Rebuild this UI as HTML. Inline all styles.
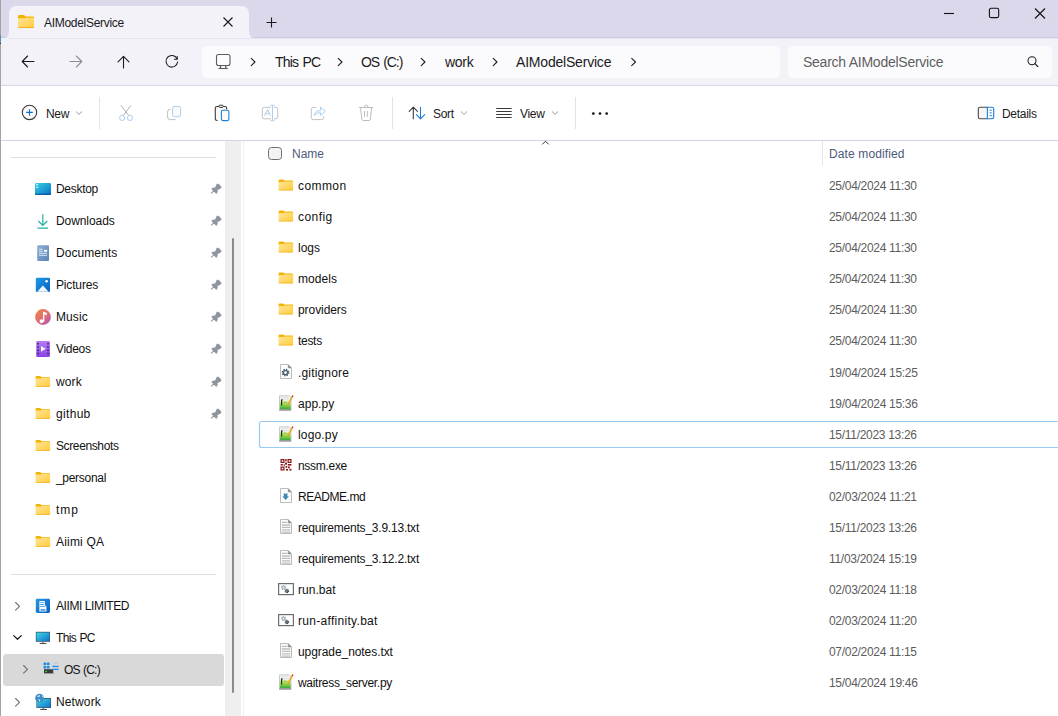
<!DOCTYPE html>
<html><head><meta charset="utf-8">
<style>
*{box-sizing:border-box;margin:0;padding:0}
html,body{width:1058px;height:716px;overflow:hidden;background:#fff;font-family:"Liberation Sans",sans-serif;color:#1a1a1a;font-variant-ligatures:none}
.a{position:absolute}
.t{position:absolute;white-space:nowrap;font-size:12px;line-height:14px;letter-spacing:-0.3px}
.t14{position:absolute;white-space:nowrap;font-size:14px;line-height:16px;letter-spacing:-0.3px}
svg{position:absolute;overflow:visible}
#title{left:0;top:0;width:1058px;height:38px;background:#dbd8ec;border-bottom:1px solid #d0cce0}
#tab{left:9px;top:6px;width:240px;height:33px;background:#f3f2f9;border-radius:7px 7px 0 0}
#nav{left:0;top:38px;width:1058px;height:48px;background:#f3f2f9;border-bottom:1px solid #d9d6e6}
#addr{left:202px;top:46px;width:578px;height:32px;background:#fbfbfe;border-radius:5px}
#search{left:788px;top:46px;width:264px;height:32px;background:#fbfbfe;border-radius:5px}
#cmd{left:0;top:86px;width:1058px;height:55px;background:#fff;border-bottom:1px solid #d5d2e3}
#lborder{left:0;top:0;width:1px;height:716px;background:#9a9a9a}
.sep{position:absolute;width:1px;background:#e3e3e3}
.s{color:#111}
.r{color:#111}
.dt{color:#5c5c5c}
.hd{color:#4d5a78}
</style></head><body>
<div id="title" class="a"></div>
<div id="nav" class="a"></div>
<div id="tab" class="a"></div>
<!-- tab inverse corners -->
<svg style="left:0;top:0" width="1058" height="40">
  <path d="M1 39 L9 39 L9 31 Q9 39 1 39 Z" fill="#f3f2f9"/>
  <path d="M257 39 L249 39 L249 31 Q249 39 257 39 Z" fill="#f3f2f9"/>
</svg>
<!-- tab folder icon -->
<svg style="left:18px;top:15px" width="16" height="13" viewBox="0 0 16 13">
  <defs><linearGradient id="fg1" x1="0" y1="0" x2="1" y2="1"><stop offset="0" stop-color="#ffe497"/><stop offset="1" stop-color="#ffcd3c"/></linearGradient></defs>
  <path d="M0 1.2 Q0 0 1.2 0 L6 0 L7.5 1.5 L14.8 1.5 Q16 1.5 16 2.7 L16 4 L0 4 Z" fill="#f2b200"/>
  <path d="M0 3.3 L6.5 3.3 L8 2.8 L16 2.8 L16 11.8 Q16 13 14.8 13 L1.2 13 Q0 13 0 11.8 Z" fill="url(#fg1)"/>
  <rect x="0" y="12" width="16" height="1" fill="#e9a700" opacity="0.7"/>
</svg>
<div class="t" style="left:44px;top:16px;color:#1a1a1a;font-size:12px">AIModelService</div>
<!-- tab close -->
<svg style="left:223px;top:17px" width="10" height="10"><path d="M0.5 0.5 L9.5 9.5 M9.5 0.5 L0.5 9.5" stroke="#1a1a1a" stroke-width="1.1"/></svg>
<!-- new tab plus -->
<svg style="left:266px;top:17px" width="11" height="11"><path d="M5.5 0.5 V10.5 M0.5 5.5 H10.5" stroke="#1a1a1a" stroke-width="1.1"/></svg>
<!-- window controls -->
<svg style="left:943px;top:8px" width="104" height="12">
  <path d="M1 5.5 H11" stroke="#111" stroke-width="1.1"/>
  <rect x="46.4" y="0.3" width="9.3" height="9.3" rx="1.6" fill="none" stroke="#111" stroke-width="1.1"/>
  <path d="M92 0.5 L102 10.5 M102 0.5 L92 10.5" stroke="#111" stroke-width="1.1"/>
</svg>

<div id="addr" class="a"></div>
<div id="search" class="a"></div>
<!-- nav icons -->
<svg style="left:0;top:0" width="1058" height="90">
  <path d="M22.3 61.5 H34 M27.6 56 L22.2 61.5 L27.6 67" fill="none" stroke="#1c1c1c" stroke-width="1.1" stroke-linecap="round" stroke-linejoin="round"/>
  <path d="M70 61.5 H81.7 M76.3 56 L81.8 61.5 L76.3 67" fill="none" stroke="#8f8f8f" stroke-width="1.1" stroke-linecap="round" stroke-linejoin="round"/>
  <path d="M123.5 56.5 V68 M118 61.8 L123.5 56.3 L129 61.8" fill="none" stroke="#1c1c1c" stroke-width="1.1" stroke-linecap="round" stroke-linejoin="round"/>
  <path d="M177 58.6 A5.8 5.8 0 1 0 177.6 62" fill="none" stroke="#1c1c1c" stroke-width="1.1" stroke-linecap="round"/>
  <path d="M177.2 56.5 V59.2 H174.4" fill="none" stroke="#1c1c1c" stroke-width="1.1" stroke-linecap="round" stroke-linejoin="round"/>
  <!-- computer -->
  <rect x="216.5" y="54.5" width="13.5" height="11" rx="2" fill="none" stroke="#5c5c5c" stroke-width="1.1"/>
  <path d="M220.5 65.5 V68 M225.8 65.5 V68" stroke="#5c5c5c" stroke-width="1.3"/>
  <path d="M218.5 68.5 H227.8" stroke="#5c5c5c" stroke-width="1.1"/>
  <!-- chevrons -->
  <g fill="none" stroke="#1c1c1c" stroke-width="1.05" stroke-linecap="round" stroke-linejoin="round">
    <path d="M251.2 58.3 L255 62 L251.2 65.7"/>
    <path d="M338.2 58.3 L342 62 L338.2 65.7"/>
    <path d="M421.2 58.3 L425 62 L421.2 65.7"/>
    <path d="M493.2 58.3 L497 62 L493.2 65.7"/>
    <path d="M631.7 58.3 L635.5 62 L631.7 65.7"/>
  </g>
  <!-- search -->
  <circle cx="1032" cy="60.7" r="4" fill="none" stroke="#1c1c1c" stroke-width="1.05"/>
  <path d="M1034.9 63.6 L1037.8 66.5" stroke="#1c1c1c" stroke-width="1.1" stroke-linecap="round"/>
</svg>
<div class="t14" style="left:275px;top:54px;letter-spacing:-0.8px;word-spacing:1.2px">This PC</div>
<div class="t14" style="left:361px;top:54px;letter-spacing:-1.05px;word-spacing:1.2px">OS (C:)</div>
<div class="t14" style="left:445px;top:54px">work</div>
<div class="t14" style="left:516px;top:54px;letter-spacing:-0.2px">AIModelService</div>
<div class="t14" style="left:803px;top:54px;color:#5f5f5f;letter-spacing:-0.25px">Search AIModelService</div>

<div id="cmd" class="a"></div>
<div class="sep" style="left:99px;top:97px;height:32px"></div>
<div class="sep" style="left:392px;top:97px;height:32px"></div>
<div class="sep" style="left:575px;top:97px;height:32px"></div>
<svg style="left:0;top:0" width="1058" height="140">
  <!-- new -->
  <circle cx="29.5" cy="112.4" r="7.2" fill="#fafafa" stroke="#3a3a3a" stroke-width="1.1"/>
  <path d="M29.5 109.2 V115.7 M26.2 112.4 H32.8" stroke="#0a6fd1" stroke-width="1.1"/>
  <g fill="none" stroke="#9a9a9a" stroke-width="1" stroke-linecap="round" stroke-linejoin="round">
    <path d="M76.3 111.8 L79 114.4 L81.7 111.8"/>
    <path d="M461.3 111.8 L464 114.4 L466.7 111.8"/>
    <path d="M552.3 111.8 L555 114.4 L557.7 111.8"/>
  </g>
  <!-- cut -->
  <path d="M121 105.3 L128.8 115.7 M130.8 105.3 L123.2 115.7" stroke="#b3b3b3" stroke-width="1"/>
  <circle cx="122.2" cy="117.9" r="2.6" fill="none" stroke="#a9cff3" stroke-width="1"/>
  <circle cx="130" cy="117.9" r="2.6" fill="none" stroke="#a9cff3" stroke-width="1"/>
  <!-- copy -->
  <path d="M170.5 109.2 Q167.6 109.2 167.6 112 V117 Q167.6 119.6 170.3 119.6 H175.6" fill="none" stroke="#bdbdbd" stroke-width="1"/>
  <rect x="172.6" y="106.4" width="8" height="10.3" rx="2" fill="#fbfbfb" stroke="#a9cff3" stroke-width="1"/>
  <!-- paste -->
  <path d="M217.6 120.5 H217 Q215.3 120.5 215.3 118.8 V108.2 Q215.3 106.5 217 106.5 H225 Q226.7 106.5 226.7 108.2 V109.5" fill="#fafafa" stroke="#3c3c3c" stroke-width="1.1"/>
  <rect x="218.8" y="105.2" width="4.5" height="2.2" rx="1.1" fill="#fff" stroke="#3c3c3c" stroke-width="1"/>
  <rect x="221.4" y="110.3" width="7.5" height="10.3" rx="1.5" fill="#fafafa" stroke="#1a7fd8" stroke-width="1.1"/>
  <!-- rename -->
  <path d="M271 107.3 H264.2 Q262.3 107.3 262.3 109.3 V116.8 Q262.3 118.8 264.2 118.8 H271 M274 107.3 H275.8 Q277.7 107.3 277.7 109.3 V116.8 Q277.7 118.8 275.8 118.8 H274" fill="none" stroke="#c2c2c2" stroke-width="1"/>
  <path d="M272.5 105.3 V120.7 M270.5 105.3 H274.5 M270.5 120.7 H274.5" stroke="#a9cff3" stroke-width="1"/>
  <path d="M264.6 115.7 L267.6 109.6 L270.6 115.7 M265.6 113.8 H269.6" fill="none" stroke="#a9cff3" stroke-width="1"/>
  <!-- share -->
  <path d="M316.3 107.3 H313.3 Q311.3 107.3 311.3 109.3 V117.6 Q311.3 119.6 313.3 119.6 H321.7 Q323.7 119.6 323.7 117.6 V116" fill="none" stroke="#c2c2c2" stroke-width="1"/>
  <path d="M314.2 115.3 Q314.8 110.6 320.6 110.6 V107 L325.2 111.3 L320.6 115.6 V112.6 Q316.6 112.4 314.2 115.3 Z" fill="none" stroke="#a9cff3" stroke-width="1" stroke-linejoin="round"/>
  <!-- delete -->
  <path d="M359 107.5 H373 M364.5 107.2 Q364.5 105.2 366.3 105.2 Q368 105.2 368 107.2" fill="none" stroke="#bdbdbd" stroke-width="1"/>
  <path d="M360.6 107.8 L361.8 119.2 Q362 120.5 363.3 120.5 H368.9 Q370.2 120.5 370.4 119.2 L371.5 107.8" fill="none" stroke="#bdbdbd" stroke-width="1"/>
  <path d="M364.5 111 V116.8 M367.3 111 V116.8" stroke="#bdbdbd" stroke-width="1"/>
  <!-- sort -->
  <path d="M413.3 107.2 V118.8 M409.2 111.4 L413.3 107.2 L417.4 111.4" fill="none" stroke="#3a3a3a" stroke-width="1.1" stroke-linecap="round" stroke-linejoin="round"/>
  <path d="M420.5 107.2 V118.8 M416.4 114.6 L420.5 118.8 L424.6 114.6" fill="none" stroke="#1a7fd8" stroke-width="1.1" stroke-linecap="round" stroke-linejoin="round"/>
  <!-- view -->
  <path d="M496.2 108.5 H511.7 M496.2 111.5 H511.7 M496.2 114.5 H511.7 M496.2 117.5 H511.7" stroke="#3a3a3a" stroke-width="1"/>
  <!-- more -->
  <circle cx="593.3" cy="113.6" r="1.35" fill="#1a1a1a"/>
  <circle cx="600" cy="113.6" r="1.35" fill="#1a1a1a"/>
  <circle cx="606.7" cy="113.6" r="1.35" fill="#1a1a1a"/>
  <!-- details -->
  <path d="M987.4 107.3 H980 Q978.3 107.3 978.3 109 V117 Q978.3 118.7 980 118.7 H987.4" fill="#f6f6f6" stroke="#4a4a4a" stroke-width="1.1"/>
  <path d="M987.4 107.3 H992 Q993.7 107.3 993.7 109 V117 Q993.7 118.7 992 118.7 H987.4 Z" fill="#fff" stroke="#1a7fd8" stroke-width="1.1"/>
  <path d="M989.5 110.2 H991.7 M989.5 112.9 H991.7 M989.5 115.6 H991.7" stroke="#1a7fd8" stroke-width="1"/>
</svg>
<div class="t" style="left:46px;top:107px;letter-spacing:-0.30px">New</div>
<div class="t" style="left:433px;top:107px;letter-spacing:-0.30px">Sort</div>
<div class="t" style="left:520px;top:107px;letter-spacing:-0.30px">View</div>
<div class="t" style="left:1002px;top:107px;letter-spacing:-0.30px">Details</div>
<svg style="left:0;top:0" width="0" height="0">
  <defs>
    <linearGradient id="gpy" x1="0" y1="0" x2="0" y2="1"><stop offset="0" stop-color="#f6f7f8"/><stop offset="0.32" stop-color="#eef3f0"/><stop offset="0.45" stop-color="#c8ea6a"/><stop offset="0.7" stop-color="#7cd04a"/><stop offset="1" stop-color="#2e9e36"/></linearGradient>
    
    
    
    
    
    
    
  </defs>
</svg>
<!-- ===== SIDEBAR ===== -->
<div class="a" style="left:11px;top:157px;width:205px;height:1px;background:#dedede"></div>
<div class="a" style="left:11px;top:574px;width:205px;height:1px;background:#dedede"></div>
<div class="a" style="left:225px;top:141px;width:16px;height:575px;background:#efefef"></div>
<div class="a" style="left:232px;top:238px;width:2px;height:455px;background:#8a8a8a;border-radius:1px"></div>
<div class="a" style="left:243px;top:141px;width:1px;height:575px;background:#f0f0f0"></div>
<div class="a" style="left:3px;top:654px;width:221px;height:32px;background:#d9d9d9;border-radius:3px"></div>
<svg style="left:0;top:0" width="250" height="716">
  <defs>
    <linearGradient id="gdesk" x1="0" y1="0" x2="1" y2="1"><stop offset="0" stop-color="#35d3e3"/><stop offset="1" stop-color="#0b6ec4"/></linearGradient>
    <linearGradient id="gdoc" x1="0" y1="0" x2="1" y2="1"><stop offset="0" stop-color="#8fb0d6"/><stop offset="1" stop-color="#5b84b4"/></linearGradient>
    <linearGradient id="gpic" x1="0" y1="0" x2="1" y2="1"><stop offset="0" stop-color="#1f9ae6"/><stop offset="1" stop-color="#0860c0"/></linearGradient>
    <linearGradient id="gmus" x1="0" y1="0" x2="1" y2="1"><stop offset="0" stop-color="#f4853a"/><stop offset="0.6" stop-color="#d96c7e"/><stop offset="1" stop-color="#a24cc6"/></linearGradient>
    <linearGradient id="gvid" x1="0" y1="0" x2="0" y2="1"><stop offset="0" stop-color="#b57df6"/><stop offset="1" stop-color="#8a44e6"/></linearGradient>
    <linearGradient id="gfold" x1="0" y1="0" x2="1" y2="1"><stop offset="0" stop-color="#ffe599"/><stop offset="1" stop-color="#ffcc3a"/></linearGradient>
    <linearGradient id="gpc" x1="0" y1="0" x2="1" y2="1"><stop offset="0" stop-color="#3ad8e6"/><stop offset="1" stop-color="#1272cc"/></linearGradient>
    <linearGradient id="gaii" x1="0" y1="0" x2="1" y2="1"><stop offset="0" stop-color="#2596e6"/><stop offset="1" stop-color="#0a62c2"/></linearGradient>
    
    
  </defs>
  <!-- Desktop -->
  <rect x="35" y="183" width="16" height="12" rx="1.2" fill="url(#gdesk)"/>
  <rect x="35" y="193.6" width="16" height="1.4" fill="#0a4f9a" opacity="0.7"/>
  <rect x="36.3" y="184" width="1.6" height="1.6" fill="#fff" opacity="0.75"/>
  <rect x="36.3" y="186.8" width="2" height="1" fill="#fff" opacity="0.9"/>
  <!-- Downloads -->
  <path d="M42.8 214.2 V225.3 M38.3 221 L42.8 225.5 L47.3 221 M37.5 228.2 H48" fill="none" stroke="#22b3a6" stroke-width="1.2"/>
  <!-- Documents -->
  <rect x="37.2" y="245.2" width="11.8" height="15.7" rx="1" fill="url(#gdoc)"/>
  <path d="M39 249.3 H42.8 M39 251.3 H42.8 M39 253.3 H47 M39 255.3 H47" stroke="#e6eef8" stroke-width="0.9"/>
  <rect x="44.1" y="249.8" width="3" height="2" fill="#fff"/>
  <!-- Pictures -->
  <rect x="35.8" y="277.8" width="14.2" height="14.2" rx="1.2" fill="url(#gpic)"/>
  <path d="M37.3 291.8 L42.9 285.6 L48.6 291.8 Z" fill="#f2f7fd"/>
  <circle cx="46.6" cy="281.2" r="1.3" fill="#fff"/>
  <!-- Music -->
  <circle cx="43" cy="317" r="7.9" fill="url(#gmus)"/>
  <path d="M43.7 312 V321.5" stroke="#fff" stroke-width="1.3"/>
  <path d="M43.2 311.6 L46.8 313 L46.8 315.2 L43.6 314.2 Z" fill="#fff"/>
  <circle cx="41.6" cy="321.2" r="1.9" fill="#fff"/>
  <!-- Videos -->
  <rect x="36.2" y="341.1" width="13.8" height="15.8" rx="1.2" fill="url(#gvid)"/>
  <g fill="#3a2a5a"><rect x="37.3" y="342.9" width="1.6" height="1.6"/><rect x="37.3" y="346.1" width="1.6" height="1.6"/><rect x="37.3" y="349.4" width="1.6" height="1.6"/><rect x="37.3" y="352.7" width="1.6" height="1.6"/>
  <rect x="47.2" y="342.9" width="1.6" height="1.6"/><rect x="47.2" y="346.1" width="1.6" height="1.6"/><rect x="47.2" y="349.4" width="1.6" height="1.6"/><rect x="47.2" y="352.7" width="1.6" height="1.6"/></g>
  <path d="M41 346 L45.8 348.8 L41 351.7 Z" fill="#f0f0f0"/>
  <!-- folders -->
  <g transform="translate(35.6 376)">
      <path d="M0 1 Q0 0 1 0 L4.6 0 L5.8 1.2 L13.5 1.2 Q14.5 1.2 14.5 2.2 L14.5 3.5 L0 3.5 Z" fill="#f3b300"/>
      <path d="M0 2.6 L5.2 2.6 L6.3 2 L14.5 2 L14.5 10 Q14.5 11 13.5 11 L1 11 Q0 11 0 10 Z" fill="url(#gfold)"/>
      <rect x="0" y="10.2" width="14.5" height="0.8" fill="#eaa900" opacity="0.6"/>
    </g>
  <g transform="translate(35.6 408)">
      <path d="M0 1 Q0 0 1 0 L4.6 0 L5.8 1.2 L13.5 1.2 Q14.5 1.2 14.5 2.2 L14.5 3.5 L0 3.5 Z" fill="#f3b300"/>
      <path d="M0 2.6 L5.2 2.6 L6.3 2 L14.5 2 L14.5 10 Q14.5 11 13.5 11 L1 11 Q0 11 0 10 Z" fill="url(#gfold)"/>
      <rect x="0" y="10.2" width="14.5" height="0.8" fill="#eaa900" opacity="0.6"/>
    </g>
  <g transform="translate(35.6 440)">
      <path d="M0 1 Q0 0 1 0 L4.6 0 L5.8 1.2 L13.5 1.2 Q14.5 1.2 14.5 2.2 L14.5 3.5 L0 3.5 Z" fill="#f3b300"/>
      <path d="M0 2.6 L5.2 2.6 L6.3 2 L14.5 2 L14.5 10 Q14.5 11 13.5 11 L1 11 Q0 11 0 10 Z" fill="url(#gfold)"/>
      <rect x="0" y="10.2" width="14.5" height="0.8" fill="#eaa900" opacity="0.6"/>
    </g>
  <g transform="translate(35.6 472)">
      <path d="M0 1 Q0 0 1 0 L4.6 0 L5.8 1.2 L13.5 1.2 Q14.5 1.2 14.5 2.2 L14.5 3.5 L0 3.5 Z" fill="#f3b300"/>
      <path d="M0 2.6 L5.2 2.6 L6.3 2 L14.5 2 L14.5 10 Q14.5 11 13.5 11 L1 11 Q0 11 0 10 Z" fill="url(#gfold)"/>
      <rect x="0" y="10.2" width="14.5" height="0.8" fill="#eaa900" opacity="0.6"/>
    </g>
  <g transform="translate(35.6 504)">
      <path d="M0 1 Q0 0 1 0 L4.6 0 L5.8 1.2 L13.5 1.2 Q14.5 1.2 14.5 2.2 L14.5 3.5 L0 3.5 Z" fill="#f3b300"/>
      <path d="M0 2.6 L5.2 2.6 L6.3 2 L14.5 2 L14.5 10 Q14.5 11 13.5 11 L1 11 Q0 11 0 10 Z" fill="url(#gfold)"/>
      <rect x="0" y="10.2" width="14.5" height="0.8" fill="#eaa900" opacity="0.6"/>
    </g>
  <g transform="translate(35.6 536)">
      <path d="M0 1 Q0 0 1 0 L4.6 0 L5.8 1.2 L13.5 1.2 Q14.5 1.2 14.5 2.2 L14.5 3.5 L0 3.5 Z" fill="#f3b300"/>
      <path d="M0 2.6 L5.2 2.6 L6.3 2 L14.5 2 L14.5 10 Q14.5 11 13.5 11 L1 11 Q0 11 0 10 Z" fill="url(#gfold)"/>
      <rect x="0" y="10.2" width="14.5" height="0.8" fill="#eaa900" opacity="0.6"/>
    </g>
  <!-- pins -->
  <g transform="translate(0 0)"><path d="M211.3 193.3 L214 190.6 M212 188.8 Q213.3 187.6 215.4 188.2 L217 184.6 Q217.6 183.8 218.4 184.5 L220.6 186.7 Q221.3 187.5 220.4 188 L216.9 189.7 Q217.6 191.7 216.3 193.1 Z" fill="#8c969e" stroke="#8c969e" stroke-width="1.1" stroke-linejoin="round"/></g>
  <g transform="translate(0 32)"><path d="M211.3 193.3 L214 190.6 M212 188.8 Q213.3 187.6 215.4 188.2 L217 184.6 Q217.6 183.8 218.4 184.5 L220.6 186.7 Q221.3 187.5 220.4 188 L216.9 189.7 Q217.6 191.7 216.3 193.1 Z" fill="#8c969e" stroke="#8c969e" stroke-width="1.1" stroke-linejoin="round"/></g>
  <g transform="translate(0 64)"><path d="M211.3 193.3 L214 190.6 M212 188.8 Q213.3 187.6 215.4 188.2 L217 184.6 Q217.6 183.8 218.4 184.5 L220.6 186.7 Q221.3 187.5 220.4 188 L216.9 189.7 Q217.6 191.7 216.3 193.1 Z" fill="#8c969e" stroke="#8c969e" stroke-width="1.1" stroke-linejoin="round"/></g>
  <g transform="translate(0 96)"><path d="M211.3 193.3 L214 190.6 M212 188.8 Q213.3 187.6 215.4 188.2 L217 184.6 Q217.6 183.8 218.4 184.5 L220.6 186.7 Q221.3 187.5 220.4 188 L216.9 189.7 Q217.6 191.7 216.3 193.1 Z" fill="#8c969e" stroke="#8c969e" stroke-width="1.1" stroke-linejoin="round"/></g>
  <g transform="translate(0 128)"><path d="M211.3 193.3 L214 190.6 M212 188.8 Q213.3 187.6 215.4 188.2 L217 184.6 Q217.6 183.8 218.4 184.5 L220.6 186.7 Q221.3 187.5 220.4 188 L216.9 189.7 Q217.6 191.7 216.3 193.1 Z" fill="#8c969e" stroke="#8c969e" stroke-width="1.1" stroke-linejoin="round"/></g>
  <g transform="translate(0 160)"><path d="M211.3 193.3 L214 190.6 M212 188.8 Q213.3 187.6 215.4 188.2 L217 184.6 Q217.6 183.8 218.4 184.5 L220.6 186.7 Q221.3 187.5 220.4 188 L216.9 189.7 Q217.6 191.7 216.3 193.1 Z" fill="#8c969e" stroke="#8c969e" stroke-width="1.1" stroke-linejoin="round"/></g>
  <g transform="translate(0 193)"><path d="M211.3 193.3 L214 190.6 M212 188.8 Q213.3 187.6 215.4 188.2 L217 184.6 Q217.6 183.8 218.4 184.5 L220.6 186.7 Q221.3 187.5 220.4 188 L216.9 189.7 Q217.6 191.7 216.3 193.1 Z" fill="#8c969e" stroke="#8c969e" stroke-width="1.1" stroke-linejoin="round"/></g>
  <g transform="translate(0 225)"><path d="M211.3 193.3 L214 190.6 M212 188.8 Q213.3 187.6 215.4 188.2 L217 184.6 Q217.6 183.8 218.4 184.5 L220.6 186.7 Q221.3 187.5 220.4 188 L216.9 189.7 Q217.6 191.7 216.3 193.1 Z" fill="#8c969e" stroke="#8c969e" stroke-width="1.1" stroke-linejoin="round"/></g>
  <!-- chevrons -->
  <g fill="none" stroke="#707070" stroke-width="1.15" stroke-linecap="round" stroke-linejoin="round">
    <path d="M15.6 602.5 L19.5 606.3 L15.6 610.1"/>
    <path d="M23.6 665.5 L27.5 669.3 L23.6 673.1"/>
    <path d="M15.6 698.5 L19.5 702.3 L15.6 706.1"/>
  </g>
  <path d="M13.7 635.6 L17.5 639.3 L21.3 635.6" fill="none" stroke="#1a1a1a" stroke-width="1.2" stroke-linecap="round" stroke-linejoin="round"/>
  <!-- AIIMI -->
  <rect x="35.8" y="598.8" width="14.2" height="14.2" rx="1.4" fill="url(#gaii)"/>
  <path d="M39.4 611.6 V601.4 Q39.4 600.9 39.9 600.9 H44.3 Q44.8 600.9 44.8 601.4 V605.3 L46.4 606 V611.6 Z" fill="#fff"/>
  <path d="M40.2 602.6 H43.8 M40.2 604.5 H43.8 M40.2 606.4 H45.5 M40.5 609.5 H45.5 M40.5 610.7 H45.5" stroke="#2f86d8" stroke-width="0.8"/>
  <!-- This PC -->
  <rect x="35.8" y="631.8" width="14.2" height="10" fill="#39596e"/>
  <rect x="36.5" y="632.6" width="12.8" height="8.4" fill="url(#gpc)"/>
  <rect x="42.2" y="641.7" width="1.6" height="1.3" fill="#7a7a7a"/>
  <rect x="39.5" y="643" width="7" height="1.1" rx="0.5" fill="#4e4e4e"/>
  <!-- OS (C:) -->
  <g fill="#1788e6"><rect x="43.6" y="662.6" width="2.6" height="2.6" rx="0.6"/><rect x="46.9" y="662.6" width="2.6" height="2.6" rx="0.6"/><rect x="43.6" y="665.9" width="2.6" height="2.6" rx="0.6"/><rect x="46.9" y="665.9" width="2.6" height="2.6" rx="0.6"/></g>
  <rect x="44" y="669.2" width="10.2" height="4.2" fill="#3a3a3a"/>
  <circle cx="46.2" cy="671.3" r="0.9" fill="#3bd64a"/>
  <path d="M54.2 664.2 Q54.2 662.2 56 662.2 Q57.8 662.2 57.8 664.2" fill="none" stroke="#aac0d6" stroke-width="0.8"/>
  <rect x="52.2" y="665.8" width="6.6" height="1.3" rx="0.5" fill="#2b90e6"/>
  <rect x="52.6" y="667.1" width="5.8" height="1.6" fill="#c6ccd2"/>
  <rect x="52.2" y="668.7" width="6.6" height="1.3" rx="0.5" fill="#2b90e6"/>
  <rect x="53.2" y="670" width="4.6" height="3.4" fill="#d0d8e0"/>
  <!-- Network -->
  <rect x="36.4" y="698" width="14.6" height="10" fill="#3a5a70"/>
  <rect x="37.1" y="698.8" width="13.2" height="8.5" fill="url(#gpc)"/>
  <rect x="42.6" y="708" width="1.6" height="1.2" fill="#7a7a7a"/>
  <rect x="40" y="709" width="7" height="1" rx="0.5" fill="#4e4e4e"/>
  <circle cx="39.5" cy="698" r="4.3" fill="#3c8cc8"/>
  <path d="M37 696.5 Q38.3 695 40 695.3 L39.2 697.2 Z M38.2 699.2 L40.5 699.8 L39.6 701.7 Z M41.5 695.2 Q43 696 43.3 697 L42.3 697 Z" fill="#d6ecf8"/>
</svg>
<div class="t s" style="left:56px;top:182px;letter-spacing:-0.30px">Desktop</div>
<div class="t s" style="left:56px;top:214px;letter-spacing:-0.08px">Downloads</div>
<div class="t s" style="left:56px;top:246px;letter-spacing:0.06px">Documents</div>
<div class="t s" style="left:56px;top:278px;letter-spacing:-0.16px">Pictures</div>
<div class="t s" style="left:56px;top:310px;letter-spacing:0.08px">Music</div>
<div class="t s" style="left:56px;top:342px;letter-spacing:-0.30px">Videos</div>
<div class="t s" style="left:56px;top:375px;letter-spacing:0.10px">work</div>
<div class="t s" style="left:56px;top:407px;letter-spacing:0.32px">github</div>
<div class="t s" style="left:56px;top:439px;letter-spacing:-0.38px">Screenshots</div>
<div class="t s" style="left:56px;top:471px;letter-spacing:-0.30px">_personal</div>
<div class="t s" style="left:56px;top:503px;letter-spacing:0.95px">tmp</div>
<div class="t s" style="left:56px;top:535px;letter-spacing:0.19px">Aiimi QA</div>
<div class="t s" style="left:56px;top:599px;letter-spacing:-0.43px">AIIMI LIMITED</div>
<div class="t s" style="left:56px;top:631px;word-spacing:0.5px;letter-spacing:-0.62px">This PC</div>
<div class="t s" style="left:64px;top:663px;word-spacing:0.5px;letter-spacing:-0.75px">OS (C:)</div>
<div class="t s" style="left:56px;top:695px;letter-spacing:0.13px">Network</div>
<!-- ===== CONTENT ===== -->
<svg style="left:0;top:0" width="1058" height="716">
  <rect x="268.5" y="147.5" width="13" height="12" rx="3" fill="#f3f3f3" stroke="#6f6f6f" stroke-width="1"/>
  <path d="M542.3 144.4 L545.5 141.2 L548.7 144.4" fill="none" stroke="#333" stroke-width="1"/>
  <rect x="822" y="141" width="1" height="25" fill="#e5e5e5"/>
  <rect x="259.5" y="421.5" width="820" height="26" rx="2" fill="none" stroke="#99c9f5" stroke-width="1.2"/>

  <g transform="translate(278.6 179.4)">
      <path d="M0 1 Q0 0 1 0 L4.6 0 L5.8 1.2 L13.5 1.2 Q14.5 1.2 14.5 2.2 L14.5 3.5 L0 3.5 Z" fill="#f3b300"/>
      <path d="M0 2.6 L5.2 2.6 L6.3 2 L14.5 2 L14.5 10 Q14.5 11 13.5 11 L1 11 Q0 11 0 10 Z" fill="url(#gfold)"/>
      <rect x="0" y="10.2" width="14.5" height="0.8" fill="#eaa900" opacity="0.6"/>
    </g>
  <g transform="translate(278.6 210.4)">
      <path d="M0 1 Q0 0 1 0 L4.6 0 L5.8 1.2 L13.5 1.2 Q14.5 1.2 14.5 2.2 L14.5 3.5 L0 3.5 Z" fill="#f3b300"/>
      <path d="M0 2.6 L5.2 2.6 L6.3 2 L14.5 2 L14.5 10 Q14.5 11 13.5 11 L1 11 Q0 11 0 10 Z" fill="url(#gfold)"/>
      <rect x="0" y="10.2" width="14.5" height="0.8" fill="#eaa900" opacity="0.6"/>
    </g>
  <g transform="translate(278.6 241.4)">
      <path d="M0 1 Q0 0 1 0 L4.6 0 L5.8 1.2 L13.5 1.2 Q14.5 1.2 14.5 2.2 L14.5 3.5 L0 3.5 Z" fill="#f3b300"/>
      <path d="M0 2.6 L5.2 2.6 L6.3 2 L14.5 2 L14.5 10 Q14.5 11 13.5 11 L1 11 Q0 11 0 10 Z" fill="url(#gfold)"/>
      <rect x="0" y="10.2" width="14.5" height="0.8" fill="#eaa900" opacity="0.6"/>
    </g>
  <g transform="translate(278.6 272.4)">
      <path d="M0 1 Q0 0 1 0 L4.6 0 L5.8 1.2 L13.5 1.2 Q14.5 1.2 14.5 2.2 L14.5 3.5 L0 3.5 Z" fill="#f3b300"/>
      <path d="M0 2.6 L5.2 2.6 L6.3 2 L14.5 2 L14.5 10 Q14.5 11 13.5 11 L1 11 Q0 11 0 10 Z" fill="url(#gfold)"/>
      <rect x="0" y="10.2" width="14.5" height="0.8" fill="#eaa900" opacity="0.6"/>
    </g>
  <g transform="translate(278.6 303.4)">
      <path d="M0 1 Q0 0 1 0 L4.6 0 L5.8 1.2 L13.5 1.2 Q14.5 1.2 14.5 2.2 L14.5 3.5 L0 3.5 Z" fill="#f3b300"/>
      <path d="M0 2.6 L5.2 2.6 L6.3 2 L14.5 2 L14.5 10 Q14.5 11 13.5 11 L1 11 Q0 11 0 10 Z" fill="url(#gfold)"/>
      <rect x="0" y="10.2" width="14.5" height="0.8" fill="#eaa900" opacity="0.6"/>
    </g>
  <g transform="translate(278.6 334.4)">
      <path d="M0 1 Q0 0 1 0 L4.6 0 L5.8 1.2 L13.5 1.2 Q14.5 1.2 14.5 2.2 L14.5 3.5 L0 3.5 Z" fill="#f3b300"/>
      <path d="M0 2.6 L5.2 2.6 L6.3 2 L14.5 2 L14.5 10 Q14.5 11 13.5 11 L1 11 Q0 11 0 10 Z" fill="url(#gfold)"/>
      <rect x="0" y="10.2" width="14.5" height="0.8" fill="#eaa900" opacity="0.6"/>
    </g>
  <g transform="translate(278 364.0)">
      <g transform="translate(0 0)">
      <path d="M2.5 0.5 H10.2 L13.5 3.8 V14.5 H2.5 Z" fill="#fdfdfd" stroke="#bcbcbc" stroke-width="1"/>
      <path d="M10.3 0.9 V3.9 H13.2 Z" fill="#8a8a8a" stroke="#8a8a8a" stroke-width="0.6"/>
    </g>
      <circle cx="7.5" cy="8.6" r="3.1" fill="none" stroke="#4d6470" stroke-width="1.6" stroke-dasharray="1.25 1.2"/>
      <circle cx="7.5" cy="8.6" r="2.2" fill="none" stroke="#4d6470" stroke-width="1.5"/>
    </g>
  <g transform="translate(278 395.0)">
      <path d="M1.5 0.8 H11 L13 2.5 V14.8 H1.5 Z" fill="url(#gpy)" stroke="#c4c4c4" stroke-width="0.9"/>
      <path d="M2.5 2.3 H10 M2.5 4.2 H12" stroke="#d6dde4" stroke-width="0.8"/>
      <rect x="1.2" y="14.4" width="12" height="1.2" fill="#8a8a8a"/>
      <path d="M3.6 5 V10.4" stroke="#2a2a2a" stroke-width="1.2"/>
      <path d="M3.2 4.8 H4.8" stroke="#2a2a2a" stroke-width="0.9"/>
      <path d="M6 7.4 H6.6 M7.8 7.4 H8.4" stroke="#555" stroke-width="0.9"/>
      <path d="M14.6 1.2 L9.2 11" stroke="#e8a520" stroke-width="1.5"/>
      <path d="M14.9 0.6 L14.2 1.9" stroke="#c0392b" stroke-width="1.5"/>
    </g>
  <g transform="translate(278 426.0)">
      <path d="M1.5 0.8 H11 L13 2.5 V14.8 H1.5 Z" fill="url(#gpy)" stroke="#c4c4c4" stroke-width="0.9"/>
      <path d="M2.5 2.3 H10 M2.5 4.2 H12" stroke="#d6dde4" stroke-width="0.8"/>
      <rect x="1.2" y="14.4" width="12" height="1.2" fill="#8a8a8a"/>
      <path d="M3.6 5 V10.4" stroke="#2a2a2a" stroke-width="1.2"/>
      <path d="M3.2 4.8 H4.8" stroke="#2a2a2a" stroke-width="0.9"/>
      <path d="M6 7.4 H6.6 M7.8 7.4 H8.4" stroke="#555" stroke-width="0.9"/>
      <path d="M14.6 1.2 L9.2 11" stroke="#e8a520" stroke-width="1.5"/>
      <path d="M14.9 0.6 L14.2 1.9" stroke="#c0392b" stroke-width="1.5"/>
    </g>
  <g transform="translate(278 457.0)" fill="#8b1818">
      <path d="M2.5 2 h4 v4 h-4 Z M3.7 3.2 v1.6 h1.6 v-1.6 Z" fill-rule="evenodd"/>
      <path d="M9.5 2 h4 v4 h-4 Z M10.7 3.2 v1.6 h1.6 v-1.6 Z" fill-rule="evenodd"/>
      <path d="M2.5 9.5 h4 v4 h-4 Z M3.7 10.7 v1.6 h1.6 v-1.6 Z" fill-rule="evenodd"/>
      <rect x="7.2" y="2" width="1.4" height="2.4"/><rect x="7" y="5.6" width="2" height="2"/>
      <rect x="2.6" y="7" width="2.2" height="1.5"/><rect x="5.6" y="7.4" width="1.4" height="1.4"/>
      <rect x="9.8" y="7" width="3.6" height="1.6"/><rect x="7.6" y="9" width="1.6" height="1.8"/>
      <rect x="10" y="9.5" width="1.8" height="1.8"/><rect x="8" y="12" width="2" height="1.6"/>
      <rect x="11.5" y="11.8" width="2" height="1.8"/>
    </g>
  <g transform="translate(278 488.0)">
      <g transform="translate(0 0)">
      <path d="M2.5 0.5 H10.2 L13.5 3.8 V14.5 H2.5 Z" fill="#fdfdfd" stroke="#bcbcbc" stroke-width="1"/>
      <path d="M10.3 0.9 V3.9 H13.2 Z" fill="#8a8a8a" stroke="#8a8a8a" stroke-width="0.6"/>
    </g>
      <path d="M5.8 5 L7.6 6 L9.4 5 V8.6 L11 8.2 L7.6 12 L4.3 8.2 L5.8 8.6 Z" fill="#3c88b0"/>
    </g>
  <g transform="translate(278 519.0)">
      <g transform="translate(0 0)">
      <path d="M2.5 0.5 H10.2 L13.5 3.8 V14.5 H2.5 Z" fill="#fdfdfd" stroke="#bcbcbc" stroke-width="1"/>
      <path d="M10.3 0.9 V3.9 H13.2 Z" fill="#8a8a8a" stroke="#8a8a8a" stroke-width="0.6"/>
    </g>
      <path d="M3.8 3.4 H9.4 M3.8 6 H12.3 M3.8 8.4 H12.3 M3.8 10.8 H12.3 M3.8 13.1 H12.3" stroke="#bdbdbd" stroke-width="1.3"/>
    </g>
  <g transform="translate(278 550.0)">
      <g transform="translate(0 0)">
      <path d="M2.5 0.5 H10.2 L13.5 3.8 V14.5 H2.5 Z" fill="#fdfdfd" stroke="#bcbcbc" stroke-width="1"/>
      <path d="M10.3 0.9 V3.9 H13.2 Z" fill="#8a8a8a" stroke="#8a8a8a" stroke-width="0.6"/>
    </g>
      <path d="M3.8 3.4 H9.4 M3.8 6 H12.3 M3.8 8.4 H12.3 M3.8 10.8 H12.3 M3.8 13.1 H12.3" stroke="#bdbdbd" stroke-width="1.3"/>
    </g>
  <g transform="translate(278 581.0)">
      <rect x="0.6" y="2.6" width="14.8" height="11" fill="#fff" stroke="#6d6d6d" stroke-width="1.2"/>
      <circle cx="5.6" cy="6.5" r="1.8" fill="none" stroke="#9aa8b6" stroke-width="1.6" stroke-dasharray="0.9 0.55"/>
      <circle cx="5.6" cy="6.5" r="1.3" fill="none" stroke="#9aa8b6" stroke-width="0.9"/>
      <circle cx="8.9" cy="10" r="1.5" fill="none" stroke="#3e4750" stroke-width="1.4" stroke-dasharray="0.8 0.4"/>
      <circle cx="8.9" cy="10" r="1.1" fill="none" stroke="#3e4750" stroke-width="0.9"/>
    </g>
  <g transform="translate(278 612.0)">
      <rect x="0.6" y="2.6" width="14.8" height="11" fill="#fff" stroke="#6d6d6d" stroke-width="1.2"/>
      <circle cx="5.6" cy="6.5" r="1.8" fill="none" stroke="#9aa8b6" stroke-width="1.6" stroke-dasharray="0.9 0.55"/>
      <circle cx="5.6" cy="6.5" r="1.3" fill="none" stroke="#9aa8b6" stroke-width="0.9"/>
      <circle cx="8.9" cy="10" r="1.5" fill="none" stroke="#3e4750" stroke-width="1.4" stroke-dasharray="0.8 0.4"/>
      <circle cx="8.9" cy="10" r="1.1" fill="none" stroke="#3e4750" stroke-width="0.9"/>
    </g>
  <g transform="translate(278 643.0)">
      <g transform="translate(0 0)">
      <path d="M2.5 0.5 H10.2 L13.5 3.8 V14.5 H2.5 Z" fill="#fdfdfd" stroke="#bcbcbc" stroke-width="1"/>
      <path d="M10.3 0.9 V3.9 H13.2 Z" fill="#8a8a8a" stroke="#8a8a8a" stroke-width="0.6"/>
    </g>
      <path d="M3.8 3.4 H9.4 M3.8 6 H12.3 M3.8 8.4 H12.3 M3.8 10.8 H12.3 M3.8 13.1 H12.3" stroke="#bdbdbd" stroke-width="1.3"/>
    </g>
  <g transform="translate(278 674.0)">
      <path d="M1.5 0.8 H11 L13 2.5 V14.8 H1.5 Z" fill="url(#gpy)" stroke="#c4c4c4" stroke-width="0.9"/>
      <path d="M2.5 2.3 H10 M2.5 4.2 H12" stroke="#d6dde4" stroke-width="0.8"/>
      <rect x="1.2" y="14.4" width="12" height="1.2" fill="#8a8a8a"/>
      <path d="M3.6 5 V10.4" stroke="#2a2a2a" stroke-width="1.2"/>
      <path d="M3.2 4.8 H4.8" stroke="#2a2a2a" stroke-width="0.9"/>
      <path d="M6 7.4 H6.6 M7.8 7.4 H8.4" stroke="#555" stroke-width="0.9"/>
      <path d="M14.6 1.2 L9.2 11" stroke="#e8a520" stroke-width="1.5"/>
      <path d="M14.9 0.6 L14.2 1.9" stroke="#c0392b" stroke-width="1.5"/>
    </g>
</svg>
<div class="t r" style="left:298px;top:179px;letter-spacing:0.42px">common</div>
<div class="t dt" style="left:829px;top:179px;letter-spacing:-0.30px">25/04/2024 11:30</div>
<div class="t r" style="left:298px;top:210px;letter-spacing:0.44px">config</div>
<div class="t dt" style="left:829px;top:210px;letter-spacing:-0.30px">25/04/2024 11:30</div>
<div class="t r" style="left:298px;top:241px;letter-spacing:-0.00px">logs</div>
<div class="t dt" style="left:829px;top:241px;letter-spacing:-0.30px">25/04/2024 11:30</div>
<div class="t r" style="left:298px;top:272px;letter-spacing:0.06px">models</div>
<div class="t dt" style="left:829px;top:272px;letter-spacing:-0.30px">25/04/2024 11:30</div>
<div class="t r" style="left:298px;top:303px;letter-spacing:-0.07px">providers</div>
<div class="t dt" style="left:829px;top:303px;letter-spacing:-0.30px">25/04/2024 11:30</div>
<div class="t r" style="left:298px;top:334px;letter-spacing:-0.30px">tests</div>
<div class="t dt" style="left:829px;top:334px;letter-spacing:-0.30px">25/04/2024 11:30</div>
<div class="t r" style="left:298px;top:366px;letter-spacing:0.16px">.gitignore</div>
<div class="t dt" style="left:829px;top:366px">19/04/2024 15:25</div>
<div class="t r" style="left:298px;top:397px;letter-spacing:0.02px">app.py</div>
<div class="t dt" style="left:829px;top:397px">19/04/2024 15:36</div>
<div class="t r" style="left:298px;top:428px;letter-spacing:0.17px">logo.py</div>
<div class="t dt" style="left:829px;top:428px">15/11/2023 13:26</div>
<div class="t r" style="left:298px;top:459px;letter-spacing:-0.30px">nssm.exe</div>
<div class="t dt" style="left:829px;top:459px">15/11/2023 13:26</div>
<div class="t r" style="left:298px;top:490px;letter-spacing:-0.47px">README.md</div>
<div class="t dt" style="left:829px;top:490px">02/03/2024 11:21</div>
<div class="t r" style="left:298px;top:521px;letter-spacing:-0.22px">requirements_3.9.13.txt</div>
<div class="t dt" style="left:829px;top:521px">15/11/2023 13:26</div>
<div class="t r" style="left:298px;top:552px;letter-spacing:-0.22px">requirements_3.12.2.txt</div>
<div class="t dt" style="left:829px;top:552px">11/03/2024 15:19</div>
<div class="t r" style="left:298px;top:583px;letter-spacing:0.03px">run.bat</div>
<div class="t dt" style="left:829px;top:583px">02/03/2024 11:18</div>
<div class="t r" style="left:298px;top:614px;letter-spacing:0.30px">run-affinity.bat</div>
<div class="t dt" style="left:829px;top:614px">02/03/2024 11:20</div>
<div class="t r" style="left:298px;top:645px;letter-spacing:-0.07px">upgrade_notes.txt</div>
<div class="t dt" style="left:829px;top:645px">07/02/2024 11:15</div>
<div class="t r" style="left:298px;top:676px;letter-spacing:-0.30px">waitress_server.py</div>
<div class="t dt" style="left:829px;top:676px">15/04/2024 19:46</div>
<div class="t hd" style="left:292px;top:147px;letter-spacing:-0.00px">Name</div>
<div class="t hd" style="left:829px;top:147px;letter-spacing:0.12px">Date modified</div>
<div class="a" style="left:7px;top:38px;width:1051px;height:1px;background:#e7e5f1"></div>
<div class="a" style="left:0;top:0;width:1px;height:716px;background:#a3a3a3"></div>
<div class="a" style="left:0;top:35px;width:1px;height:8px;background:#5d8db5"></div>
<div class="a" style="left:0;top:43px;width:1px;height:1px;background:#333"></div>
</body></html>
